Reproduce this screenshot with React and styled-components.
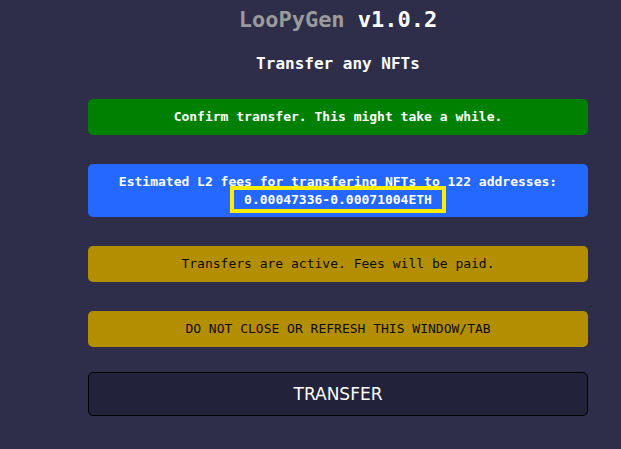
import styled, { createGlobalStyle } from "styled-components";

const GlobalStyle = createGlobalStyle`
  html, body {
    margin: 0;
    padding: 0;
    background: #2e2e4a;
  }
  body {
    font-family: "DejaVu Sans Mono", "Liberation Mono", monospace;
    color: #fff;
  }
`;

const App = () => {
  return (
    <>
      <GlobalStyle />
      <Page>
        <Title>
          <Brand>LooPyGen</Brand> v1.0.2
        </Title>
        <Subtitle>Transfer any NFTs</Subtitle>
        <Stack>
          <Notice tone="green">Confirm transfer. This might take a while.</Notice>
          <Notice tone="blue">
            Estimated L2 fees for transfering NFTs to 122 addresses:
            <br />
            <Fee>0.00047336-0.00071004ETH</Fee>
          </Notice>
          <Notice tone="yellow">Transfers are active. Fees will be paid.</Notice>
          <Notice tone="yellow">DO NOT CLOSE OR REFRESH THIS WINDOW/TAB</Notice>
        </Stack>
        <SubmitButton>TRANSFER</SubmitButton>
      </Page>
    </>
  );
};

export default App;

const tones = {
  green: { bg: "#008000", fg: "#ffffff", weight: 700 },
  blue: { bg: "#2468ff", fg: "#ffffff", weight: 700 },
  yellow: { bg: "#b38f00", fg: "#0e0a08", weight: 400 },
};

const Page = styled.div`
  width: 500px;
  margin-left: 88px;
  padding-top: 6px;
  display: flex;
  flex-direction: column;
  align-items: stretch;
`;

const Title = styled.h1`
  margin: 0;
  font-size: 22px;
  line-height: 28px;
  font-weight: 700;
  text-align: center;
  color: #ffffff;
`;

const Brand = styled.span`
  color: #9b9b9b;
`;

const Subtitle = styled.h2`
  margin: 20px 0 25px;
  font-size: 16px;
  line-height: 20px;
  font-weight: 700;
  text-align: center;
`;

const Stack = styled.div`
  display: flex;
  flex-direction: column;
  gap: 29px;
`;

const Notice = styled.div`
  padding: 9px 10px;
  border-radius: 5px;
  font-size: 13px;
  line-height: 18px;
  text-align: center;
  background: ${(p) => tones[p.tone].bg};
  color: ${(p) => tones[p.tone].fg};
  font-weight: ${(p) => tones[p.tone].weight};
  ${(p) => (p.tone === "blue" ? "padding-bottom: 8px;" : "")}
`;

const Fee = styled.span`
  padding: 2px 10px;
  border: 4px solid #ffee00;
`;

const SubmitButton = styled.button`
  margin-top: 25px;
  height: 44px;
  border: 1px solid #000;
  border-radius: 5px;
  background: #22233a;
  color: #ffffff;
  font-family: "DejaVu Sans", "Noto Sans", sans-serif;
  font-size: 17px;
  font-weight: 500;
`;
